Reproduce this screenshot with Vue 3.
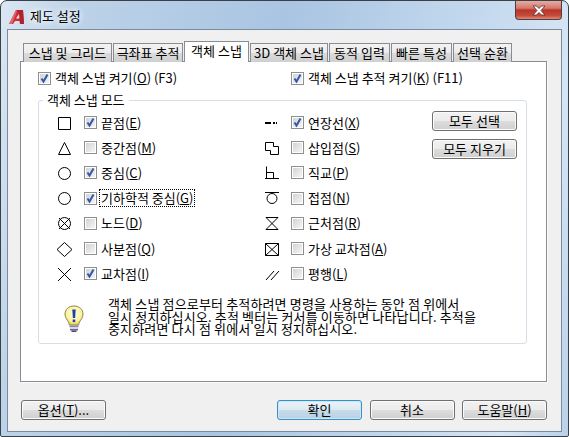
<script setup>
const tabs = [
  { label: '스냅 및 그리드', width: 89 },
  { label: '극좌표 추적', width: 70 },
  { label: '객체 스냅', width: 65, active: true },
  { label: '3D 객체 스냅', width: 78 },
  { label: '동적 입력', width: 61 },
  { label: '빠른 특성', width: 61 },
  { label: '선택 순환', width: 59 },
];

const leftModes = [
  { name: '끝점', key: 'E', on: true, d: 'M4.5 3.5h12v12h-12z' },
  { name: '중간점', key: 'M', d: 'M10.5 3.5L4.5 15.5H16.5z' },
  { name: '중심', key: 'C', on: true, d: 'M4.5 9.5a6 6 0 1 0 12 0a6 6 0 1 0 -12 0' },
  { name: '기하학적 중심', key: 'G', on: true, focus: true, d: 'M4.5 9.5a6 6 0 1 0 12 0a6 6 0 1 0 -12 0' },
  { name: '노드', key: 'D', d: 'M4.5 9.5a6 6 0 1 0 12 0a6 6 0 1 0 -12 0M5 4L16 15M16 4L5 15' },
  { name: '사분점', key: 'Q', d: 'M10.5 2.5L18 9.5L10.5 16.5L3 9.5z' },
  { name: '교차점', key: 'I', on: true, d: 'M4 3L17 16M17 3L4 16' },
];

const rightModes = [
  { name: '연장선', key: 'X', on: true, d: 'M7 8.5h6M7 9.5h6M15 8.5h2M15 9.5h2M18 8.5h1M18 9.5h1' },
  { name: '삽입점', key: 'S', d: 'M7.5 3.5h8v4h5v8h-8v-4h-5z' },
  { name: '직교', key: 'P', d: 'M8.5 2.5v12M7 14.5h14M8.5 8.5h7v6' },
  { name: '접점', key: 'N', d: 'M7 3.5h14M9 9.5a5 5 0 1 0 10 0a5 5 0 1 0 -10 0' },
  { name: '근처점', key: 'R', d: 'M8 3.5h12L8 15.5h12L8 3.5' },
  { name: '가상 교차점', key: 'A', d: 'M7.5 3.5h13v12h-13zM7.5 3.5L20.5 15.5M20.5 3.5L7.5 15.5' },
  { name: '평행', key: 'L', d: 'M8 15L16 6M13 15L21 6' },
];

const columns = [
  { id: 'left', modes: leftModes },
  { id: 'right', modes: rightModes },
];
</script>

<template>
  <div class="window">
    <div class="titlebar">
      <svg class="logo" width="18" height="18" viewBox="0 0 18 18">
        <path d="M1 16L8 2h7l1 14h-4l-.3-3H7l-2 3z" fill="#cc2f3a" />
        <path d="M8 2h7l1 14h-4L11 5z" fill="#b0222e" />
        <path d="M8 10.5h3.4L11 6z" fill="#f3d9d9" />
        <path d="M1 16L8 2l1 1-5 13z" fill="#e2686f" />
      </svg>
      <span class="title">제도 설정</span>
      <div class="close">
        <svg width="16" height="11" viewBox="0 0 16 11">
          <path d="M2 1h3.5L8 3.5 10.5 1H14l-4 4.5L14 10h-3.500L8 7.500 5.500 10H2l4-4.500z" fill="#fff" stroke="#5a2a2a" stroke-width="0.8" />
        </svg>
      </div>
    </div>

    <div class="client">
      <div class="tabs">
        <div
          v-for="tab in tabs"
          :key="tab.label"
          class="tab"
          :class="{ active: tab.active }"
          :style="{ width: tab.width + 'px' }"
        >{{ tab.label }}</div>
      </div>

      <div class="panel">
        <div class="toggles">
          <label class="check toggle-a">
            <span class="box"><svg width="11" height="11" viewBox="0 0 11 11"><path d="M2.500 5.500L4.500 8.500L8.500 1.500" class="tick" /></svg></span>
            <span>객체 스냅 켜기(<u>O</u>) (F3)</span>
          </label>
          <label class="check">
            <span class="box"><svg width="11" height="11" viewBox="0 0 11 11"><path d="M2.500 5.500L4.500 8.500L8.500 1.500" class="tick" /></svg></span>
            <span>객체 스냅 추적 켜기(<u>K</u>) (F11)</span>
          </label>
        </div>

        <fieldset class="group">
          <legend>객체 스냅 모드</legend>
          <div class="modes">
            <div v-for="col in columns" :key="col.id" class="mode-col" :class="col.id">
              <div v-for="mode in col.modes" :key="mode.key" class="mode-row">
                <svg class="mode-icon" width="22" height="18" viewBox="0 0 22 18">
                  <path :d="mode.d" fill="none" stroke="#000" stroke-width="1" />
                </svg>
                <label class="check">
                  <span class="box">
                    <svg v-if="mode.on" width="11" height="11" viewBox="0 0 11 11"><path d="M2.500 5.500L4.500 8.500L8.500 1.500" class="tick" /></svg>
                  </span>
                  <span :class="{ focused: mode.focus }">{{ mode.name }}(<u>{{ mode.key }}</u>)</span>
                </label>
              </div>
            </div>
            <div class="side-buttons">
              <button class="btn">모두 선택</button>
              <button class="btn">모두 지우기</button>
            </div>
          </div>

          <div class="note">
            <svg class="bulb" width="20" height="28" viewBox="0 0 20 28">
              <defs>
                <radialGradient id="glass" cx="0.5" cy="0.4" r="0.6">
                  <stop offset="0" stop-color="#fffde0" />
                  <stop offset="0.7" stop-color="#fbf3a0" />
                  <stop offset="1" stop-color="#e6cf3c" />
                </radialGradient>
              </defs>
              <path d="M10 1C4.500 1 1 4.500 1 9c0 3.500 2 5.500 3.500 8 .5 1 .8 2 .8 3h9.400c0-1 .3-2 .8-3C17 14.500 19 12.500 19 9c0-4.500-3.500-8-9-8z" fill="url(#glass)" stroke="#8c8650" stroke-width="1" />
              <path d="M8.300 4.500h3.400l-.6 8.500H8.900z" fill="#1d3fa6" />
              <rect x="8.700" y="14.500" width="2.600" height="2.600" fill="#1d3fa6" />
              <path d="M5.500 20.500h9v1.800h-9z" fill="#8f86b8" />
              <path d="M6 22.300h8v1.700H6z" fill="#d8d4e4" />
              <path d="M6 24h8v1.500H6z" fill="#6e6596" />
              <path d="M7.500 25.500h5V27h-5z" fill="#4b4570" />
            </svg>
            <p>객체 스냅 점으로부터 추적하려면 명령을 사용하는 동안 점 위에서<br />일시 정지하십시오. 추적 벡터는 커서를 이동하면 나타납니다. 추적을<br />중지하려면 다시 점 위에서 일시 정지하십시오.</p>
          </div>
        </fieldset>
      </div>

      <div class="footer">
        <button class="btn">옵션(<u>T</u>)...</button>
        <button class="btn primary">확인</button>
        <button class="btn">취소</button>
        <button class="btn">도움말(<u>H</u>)</button>
      </div>
    </div>
  </div>
</template>

<style scoped>
.window {
  width: 569px;
  height: 437px;
  box-sizing: border-box;
  padding: 0 6px 4px;
  display: flex;
  flex-direction: column;
  border: 1px solid #3a4048;
  border-radius: 7px 7px 2px 2px;
  background: linear-gradient(100deg, #dbe7f3 0%, #bcd2e8 12%, #a9c5e2 45%, #c4d9ee 75%, #d6e5f4 90%, #b9d1ea 100%);
  font-family: "Noto Sans CJK KR", "Liberation Sans", sans-serif;
  font-size: 13px;
  color: #000;
}

.titlebar {
  height: 28px;
  flex: none;
  display: flex;
  align-items: flex-start;
}

.logo {
  margin: 7px 0 0 1px;
}

.title {
  margin: 5px 0 0 4px;
  line-height: 20px;
  text-shadow: 0 0 6px #fff, 0 0 6px #fff;
}

.close {
  margin-left: auto;
  width: 47px;
  height: 19px;
  box-sizing: border-box;
  border: 1px solid #5b3a3a;
  border-top: none;
  border-radius: 0 0 4px 4px;
  background: linear-gradient(#e6aca2 0%, #d4786b 40%, #b8372a 50%, #c44a3a 80%, #dc8b7c 100%);
  display: flex;
  align-items: center;
  justify-content: center;
}

.client {
  flex: 1;
  min-height: 0;
  box-sizing: border-box;
  border: 1px solid #7b8a9c;
  background: #f0f0f0;
  padding: 11px 14px 0 12px;
  display: flex;
  flex-direction: column;
}

.tabs {
  display: flex;
  align-items: flex-end;
  gap: 1px;
  height: 21px;
  padding-left: 3px;
  position: relative;
  z-index: 1;
  margin-bottom: -1px;
}

.tab {
  height: 19px;
  flex: none;
  box-sizing: border-box;
  border: 1px solid #898c95;
  border-bottom: none;
  background: linear-gradient(#f3f3f3 0%, #ebebeb 50%, #dcdcdc 50%, #cfcfcf 100%);
  text-align: center;
  line-height: 17px;
  white-space: nowrap;
}

.tab.active {
  height: 21px;
  background: #fff;
  line-height: 18px;
}

.panel {
  height: 321px;
  flex: none;
  box-sizing: border-box;
  border: 1px solid #898c95;
  background: #fff;
  box-shadow: 1px 1px 0 #fbfbfb;
  padding: 8px 19px 0 17px;
}

.toggles {
  display: flex;
  height: 16px;
}

.toggle-a {
  width: 253px;
}

.check {
  display: flex;
  align-items: center;
  gap: 4px;
  white-space: nowrap;
  line-height: 16px;
}

.box {
  width: 13px;
  height: 13px;
  flex: none;
  box-sizing: border-box;
  border: 1px solid #8e8f8f;
  background: linear-gradient(135deg, #d0d0d0, #f8f8f8);
  box-shadow: inset 0 0 0 1px #fff;
  display: block;
}

.box svg {
  display: block;
}

.tick {
  fill: none;
  stroke: #3557ab;
  stroke-width: 2;
}

.group {
  margin: 7px 0 0;
  padding: 0 9px 0 15px;
  height: 251px;
  box-sizing: border-box;
  border: 1px solid #d5dfe5;
  border-radius: 3px;
}

legend {
  margin-left: -11px;
  padding: 0 4px;
  line-height: 14px;
}

.modes {
  display: flex;
  padding-top: 3px;
}

.mode-col.left {
  width: 204px;
}

.mode-col.right {
  width: 174px;
}

.mode-row {
  height: 25.2px;
  display: flex;
  align-items: center;
}

.left .mode-icon {
  margin-right: 8px;
}

.right .mode-icon {
  margin-right: 11px;
}

.focused {
  outline: 1px dotted #000;
  margin-left: -1px;
  padding: 0 1px;
}

.side-buttons {
  flex: 1;
  display: flex;
  flex-direction: column;
  gap: 8px;
  padding-top: 1px;
}

.btn {
  width: 85px;
  height: 20px;
  padding: 0;
  box-sizing: border-box;
  border: 1px solid #707070;
  border-radius: 3px;
  background: linear-gradient(#f2f2f2 0%, #ebebeb 50%, #dddddd 50%, #cfcfcf 100%);
  box-shadow: inset 0 0 0 1px #fbfbfb;
  font: inherit;
  line-height: 16px;
  color: #000;
  white-space: nowrap;
}

.note {
  display: flex;
  align-items: flex-start;
  margin-top: 12px;
}

.bulb {
  margin: 7px 0 0 10px;
  flex: none;
}

.note p {
  margin: 0 0 0 24px;
  line-height: 12.500px;
  white-space: nowrap;
  letter-spacing: 0.15px;
}

.footer {
  display: flex;
  gap: 7.500px;
  padding: 18px 0 0 1px;
}

.footer .btn:nth-child(2) {
  margin-left: auto;
  border-color: #3c8fc4;
  background: linear-gradient(#eaf3f9 0%, #dbe9f2 50%, #c6dcea 50%, #b7d0e0 100%);
  box-shadow: inset 0 0 0 1px #c4eafc;
}
</style>

<style>
html, body {
  margin: 0;
  background: #fff;
  overflow: hidden;
}
</style>
